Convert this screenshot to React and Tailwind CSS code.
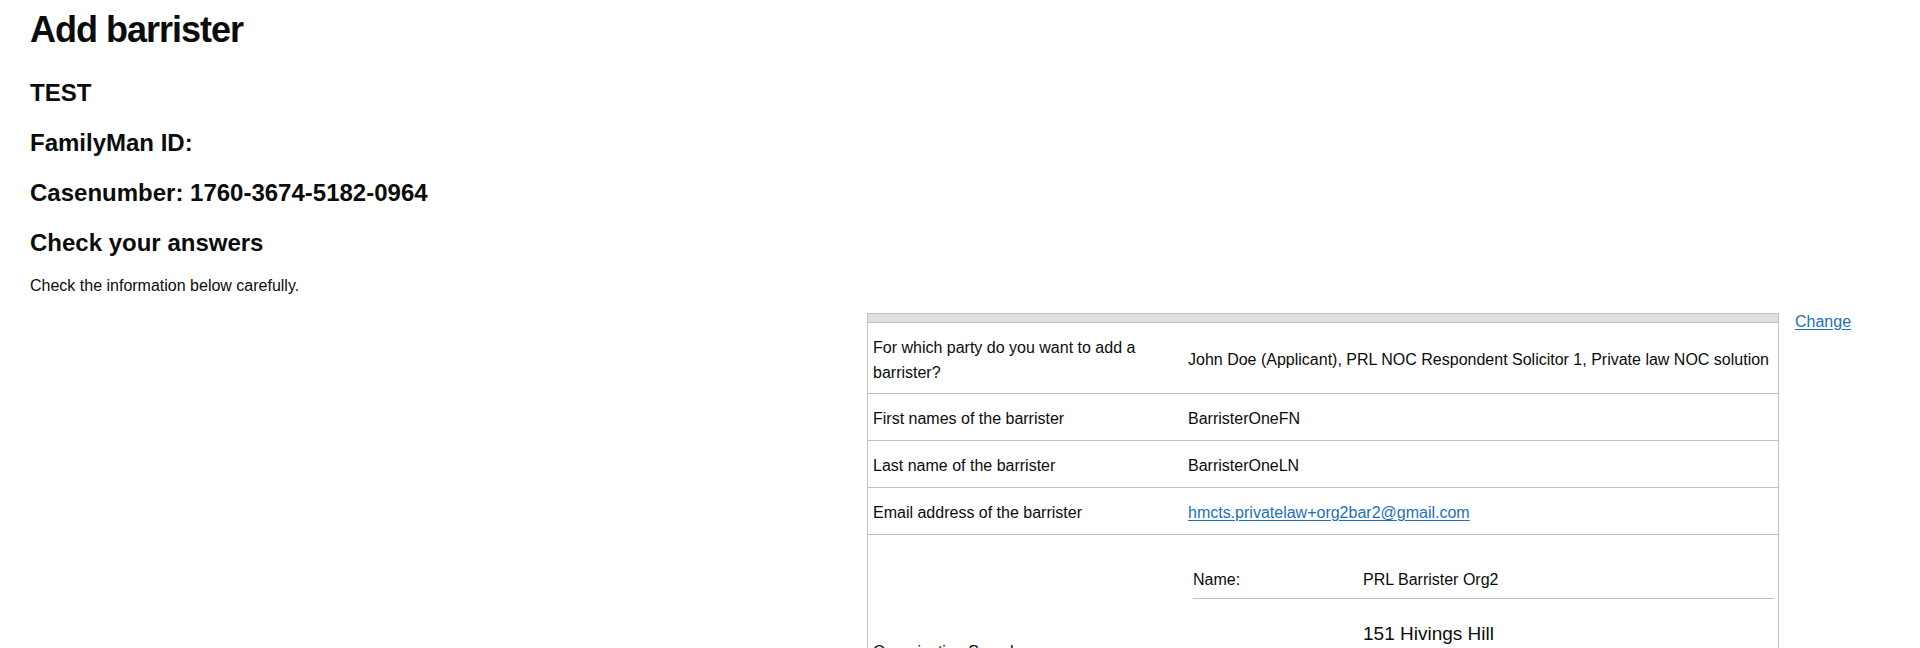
import React from "react";

const rows = [
  {
    label: "For which party do you want to add a barrister?",
    value: "John Doe (Applicant), PRL NOC Respondent Solicitor 1, Private law NOC solution",
    tall: true,
  },
  { label: "First names of the barrister", value: "BarristerOneFN" },
  { label: "Last name of the barrister", value: "BarristerOneLN" },
  {
    label: "Email address of the barrister",
    value: "hmcts.privatelaw+org2bar2@gmail.com",
    link: true,
  },
];

const address = [
  "151 Hivings Hill",
  "Chesham",
  "Buckinghamshire",
  "United Kingdom",
  "HP5 2PL",
];

const AnswerRow = ({ label, value, tall, link }) => {
  return (
    <div
      className={`grid grid-cols-[315px_1fr] items-center border-b border-[#bfc1c3] ${
        tall ? "h-[71px] pt-[3px]" : "h-[47px] pt-[4px]"
      }`}
    >
      <div className={`pl-[5px] pr-[8px] ${tall ? "leading-[25px]" : "leading-6"}`}>{label}</div>
      <div className="pl-[5px] pr-[8px] leading-6">
        {link ? (
          <a href="#" className="text-[#1d70b8] underline underline-offset-2">
            {value}
          </a>
        ) : (
          value
        )}
      </div>
    </div>
  );
};

const OrganisationRow = () => {
  return (
    <div className="grid grid-cols-[315px_1fr] items-center border-b border-[#bfc1c3]">
      <div className="pl-[5px] leading-6">Organisation Search</div>
      <div className="pl-[10px] pr-[4px] pt-[19px] pb-[6px]">
        <div className="grid grid-cols-[170px_1fr] items-center border-b border-[#bfc1c3] pt-[14px] pb-[6px]">
          <div className="leading-6">Name:</div>
          <div className="leading-6">PRL Barrister Org2</div>
        </div>
        <div className="grid grid-cols-[170px_1fr] items-center pt-[22px] pb-[17px]">
          <div className="leading-6">Address:</div>
          <div className="text-[19px] leading-[25px]">
            {address.map((line) => (
              <div key={line}>{line}</div>
            ))}
          </div>
        </div>
      </div>
    </div>
  );
};

export default function App() {
  return (
    <div className="min-h-screen bg-white px-[30px] pt-[10px] pb-10 font-['Liberation_Sans',Arial,sans-serif] text-[#0b0c0c]">
      <h1 className="text-[36px] leading-[40px] font-bold tracking-[-1px]">Add barrister</h1>
      <h2 className="mt-[28px] text-[24px] leading-[30px] font-bold">TEST</h2>
      <h2 className="mt-[20px] text-[24px] leading-[30px] font-bold">FamilyMan ID:</h2>
      <h2 className="mt-[20px] text-[24px] leading-[30px] font-bold">
        Casenumber: 1760-3674-5182-0964
      </h2>
      <h2 className="mt-[20px] text-[24px] leading-[30px] font-bold">Check your answers</h2>
      <p className="mt-[18px] text-base leading-5">Check the information below carefully.</p>

      <div className="mt-[17px] flex items-start">
        <div className="ml-[837px] w-[912px] border-x border-t border-[#bfc1c3] text-base">
          <div className="h-[9px] bg-[#dee0e2] border-b border-[#bfc1c3]" />
          {rows.map((row) => (
            <AnswerRow key={row.label} {...row} />
          ))}
          <OrganisationRow />
        </div>
        <a
          href="#"
          className="ml-[16px] mt-[2px] text-base leading-[14px] text-[#1d70b8] underline underline-offset-2"
        >
          Change
        </a>
      </div>
    </div>
  );
}
